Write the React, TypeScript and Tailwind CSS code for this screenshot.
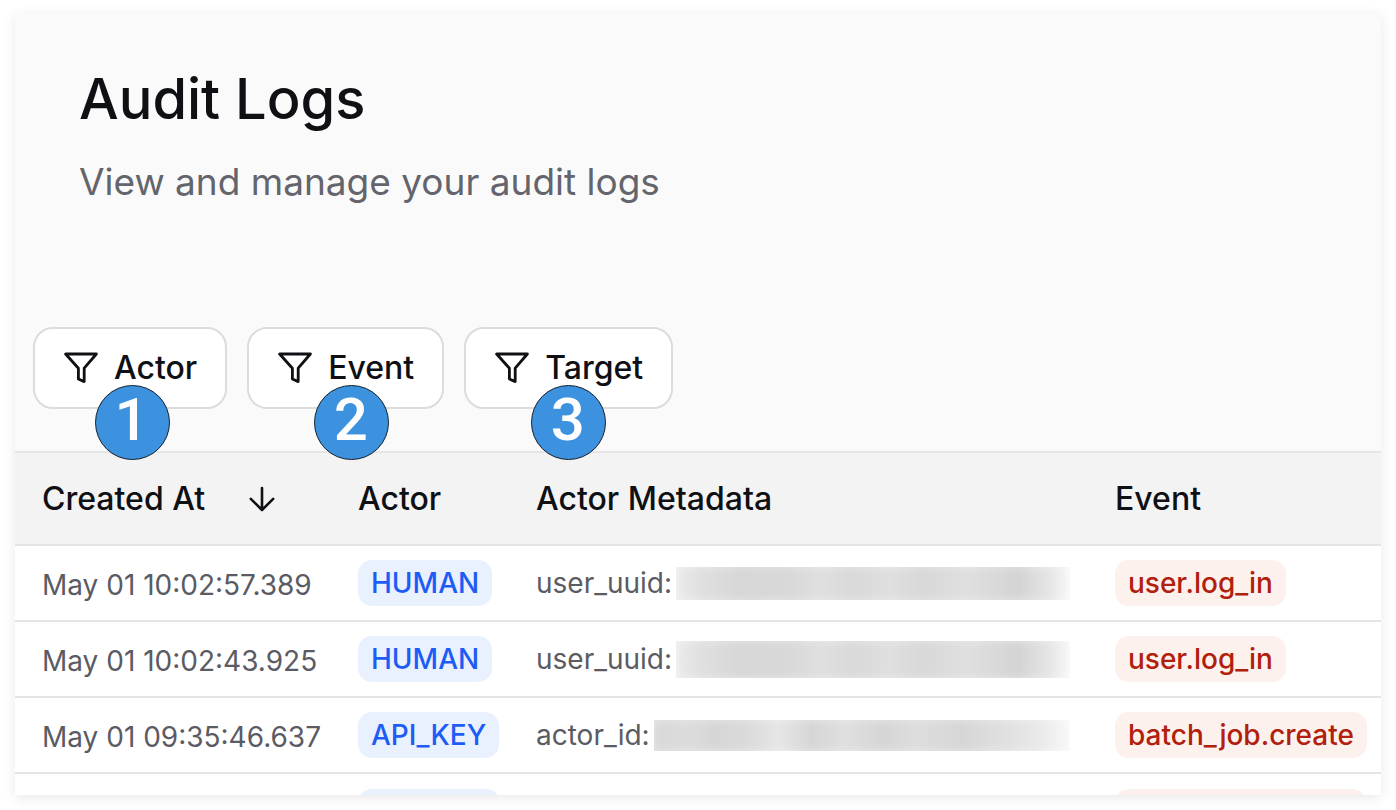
import React from "react";
import clsx from "clsx";

const filters = [
  { label: "Actor", step: 1, stepPosition: "left-[62px]" },
  { label: "Event", step: 2, stepPosition: "left-[67px]" },
  { label: "Target", step: 3, stepPosition: "left-[67px]" },
];

const userMask =
  "bg-[linear-gradient(90deg,#ececec_0%,#e0e0e0_6%,#d7d7d7_16%,#d8d8d8_28%,#dfdfdf_37%,#d9d9d9_45%,#dfdfdf_54%,#d8d8d8_63%,#dfdfdf_74%,#d4d4d4_87%,#e6e6e6_95%,#f8f8f8_100%)]";
const keyMask =
  "bg-[linear-gradient(90deg,#d8d8d8_0%,#dcdcdc_8%,#d6d6d7_15%,#dadada_22%,#e6e6e6_30%,#d6d6d7_38%,#dfdfdf_46%,#d6d6d6_55%,#dddddd_63%,#d6d6d6_74%,#e2e2e2_86%,#eaeaea_93%,#f9f9f9_100%)]";

const logs = [
  {
    createdAt: "May 01 10:02:57.389",
    actor: "HUMAN",
    metaKey: "user_uuid:",
    mask: userMask,
    maskHeight: "h-[33px]",
    event: "user.log_in",
  },
  {
    createdAt: "May 01 10:02:43.925",
    actor: "HUMAN",
    metaKey: "user_uuid:",
    mask: userMask,
    maskHeight: "h-[37px]",
    event: "user.log_in",
  },
  {
    createdAt: "May 01 09:35:46.637",
    actor: "API_KEY",
    metaKey: "actor_id:",
    mask: keyMask,
    maskHeight: "h-[31px]",
    event: "batch_job.create",
  },
];

function FunnelIcon() {
  return (
    <svg
      className="w-[34px] h-8 shrink-0"
      viewBox="0 0 34 32"
      fill="none"
      stroke="currentColor"
      strokeWidth="2.8"
      strokeLinejoin="round"
      aria-hidden="true"
    >
      <path d="M1.6 2H32.4L20.2 16.2V29.6L14.4 27V16.2Z" />
    </svg>
  );
}

function ArrowDownIcon() {
  return (
    <svg
      className="w-[26px] h-[26px] shrink-0"
      viewBox="0 0 26 26"
      fill="none"
      stroke="currentColor"
      strokeWidth="2.6"
      strokeLinecap="round"
      strokeLinejoin="round"
      aria-hidden="true"
    >
      <path d="M13 2V24M1.8 12.8L13 24L24.2 12.8" />
    </svg>
  );
}

function Tag({ tone, children }: { tone: "blue" | "red"; children: React.ReactNode }) {
  return (
    <span
      className={clsx(
        "inline-flex h-[46px] items-center rounded-[14px] px-[13px] text-[28px] font-medium",
        tone === "blue" ? "bg-[#eaf1fe] text-[#1d5cf5]" : "bg-[#fdf1ed] text-[#b0200c]"
      )}
    >
      {children}
    </span>
  );
}

export default function App() {
  return (
    <div className="flex h-screen flex-col bg-white pt-[13px] pr-[15px] pb-[15px] pl-[15px] font-['Inter',sans-serif] text-[#0f1014]">
      <main className="min-h-0 flex-1 overflow-hidden bg-[#fafafa] shadow-[0_3px_12px_rgba(0,0,0,0.09)]">
        {/* Page title */}
        <header className="px-16 pt-[54px]">
          <h1 className="text-[56px] leading-[64px] font-medium">Audit Logs</h1>
          <p className="mt-[27px] text-[37px] leading-[48px] text-[#64646c]">
            View and manage your audit logs
          </p>
        </header>

        {/* Filters */}
        <div className="mt-[121px] mb-[42px] flex gap-5 px-[18px]">
          {filters.map((filter) => (
            <div key={filter.label} className="relative">
              <button
                type="button"
                className="flex h-[82px] items-center gap-4 rounded-[20px] border-2 border-[#dcdcdc] bg-white pr-7 pl-[29px] text-[32px] font-medium"
              >
                <FunnelIcon />
                {filter.label}
              </button>
              <span
                className={clsx(
                  "absolute top-[58px] flex h-[75px] w-[75px] justify-center rounded-full border border-[#15202b] bg-[#3d92df] pr-[2px] font-['Roboto',sans-serif] text-[60px] leading-[68px] font-medium text-white",
                  filter.stepPosition
                )}
              >
                {filter.step}
              </span>
            </div>
          ))}
        </div>

        {/* Log table */}
        <table className="w-full table-fixed border-separate border-spacing-0 bg-white text-left">
          <colgroup>
            <col className="w-[316px]" />
            <col className="w-[178px]" />
            <col />
            <col className="w-[293px]" />
          </colgroup>
          <thead className="bg-[#f3f3f3] text-[32px]">
            <tr className="h-[95px]">
              <th className="border-y-2 border-[#e5e5e5] py-0 pl-[27px] font-medium" aria-sort="descending">
                <button type="button" className="flex items-center gap-11">
                  Created At
                  <ArrowDownIcon />
                </button>
              </th>
              <th className="border-y-2 border-[#e5e5e5] py-0 pl-[27px] font-medium">Actor</th>
              <th className="border-y-2 border-[#e5e5e5] py-0 pl-[27px] font-medium">
                Actor Metadata
              </th>
              <th className="border-y-2 border-[#e5e5e5] py-0 pl-[27px] font-medium">Event</th>
            </tr>
          </thead>
          <tbody className="text-[28px] whitespace-nowrap text-[#5b5b63]">
            {logs.map((log) => (
              <tr key={log.createdAt} className="h-[76px]">
                <td className="border-b-2 border-[#e5e5e5] pt-1 pb-0 pl-[27px]">{log.createdAt}</td>
                <td className="border-b-2 border-[#e5e5e5] py-0 pl-[27px]">
                  <div className="flex">
                    <Tag tone="blue">{log.actor}</Tag>
                  </div>
                </td>
                <td className="border-b-2 border-[#e5e5e5] py-0 pr-[18px] pl-[27px]">
                  <div className="flex items-center gap-1">
                    {log.metaKey}
                    <span
                      className={clsx(
                        "flex-1 shadow-[inset_0_0_10px_rgba(255,255,255,0.4)]",
                        log.maskHeight,
                        log.mask
                      )}
                    />
                  </div>
                </td>
                <td className="border-b-2 border-[#e5e5e5] py-0 pl-[27px]">
                  <div className="flex">
                    <Tag tone="red">{log.event}</Tag>
                  </div>
                </td>
              </tr>
            ))}
            {/* Next row, still loading */}
            <tr className="h-[76px]" aria-hidden="true">
              <td />
              <td className="py-0 pl-[27px]">
                <div className="h-[46px] w-[142px] rounded-[14px] bg-[#eaf1fe]" />
              </td>
              <td />
              <td className="py-0 pl-[27px]">
                <div className="h-[46px] w-[251px] rounded-[14px] bg-[#fdf1ed]" />
              </td>
            </tr>
          </tbody>
        </table>
      </main>
    </div>
  );
}
